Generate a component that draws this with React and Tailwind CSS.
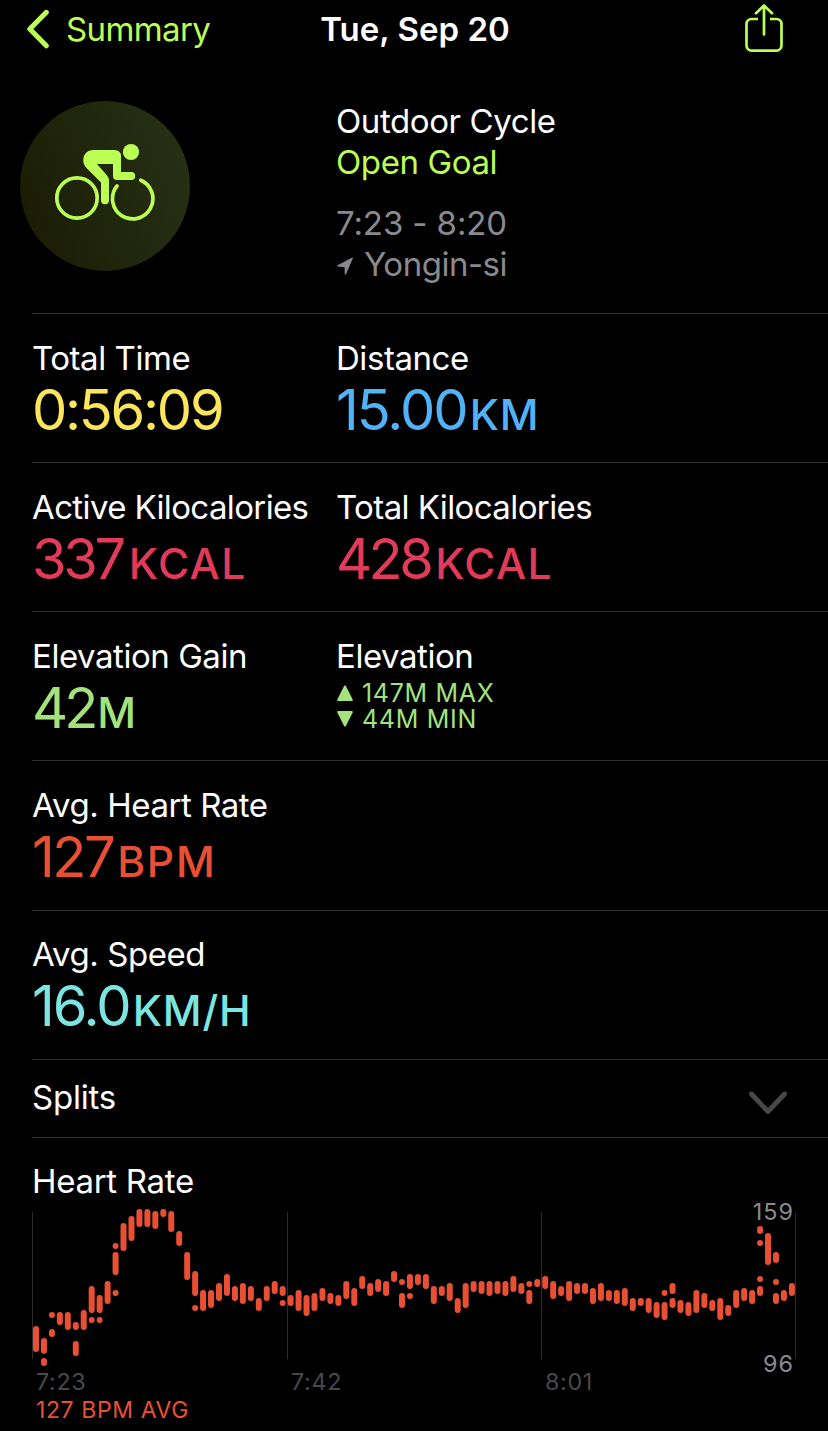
const METRIC_ROWS = [
  {
    height: 'h-[149px]',
    items: [
      { label: 'Total Time', value: '0:56:09', color: 'text-[#fbe65b]', tracking: 'tracking-[-2.3px]' },
      { label: 'Distance', value: '15.00', unit: 'KM', gap: 'ml-[3px] tracking-[0.9px]', color: 'text-[#52b2f7]', tracking: 'tracking-[-2px]' },
    ],
  },
  {
    height: 'h-[149px]',
    items: [
      { label: 'Active Kilocalories', labelTracking: 'tracking-[-0.63px]', value: '337', unit: 'KCAL', gap: 'ml-[6px] tracking-[1.5px]', color: 'text-[#e23a59]', tracking: 'tracking-[-3.4px]' },
      { label: 'Total Kilocalories', labelTracking: 'tracking-[-0.6px]', value: '428', unit: 'KCAL', gap: 'ml-[5px] tracking-[1.4px]', color: 'text-[#e23a59]', tracking: 'tracking-[-3.6px]' },
    ],
  },
  {
    height: 'h-[149px]',
    items: [
      { label: 'Elevation Gain', value: '42', unit: 'M', gap: 'ml-[3px]', color: 'text-[#a3e27d]', tracking: 'tracking-[-4px]' },
      { label: 'Elevation', range: { max: '147M MAX', min: '44M MIN' } },
    ],
  },
  {
    height: 'h-[150px]',
    items: [{ label: 'Avg. Heart Rate', value: '127', unit: 'BPM', gap: 'ml-[4px] tracking-[1.8px]', color: 'text-[#e95033]', tracking: 'tracking-[-2.5px]' }],
  },
  {
    height: 'h-[149px]',
    padding: 'pt-[23px]',
    items: [{ label: 'Avg. Speed', value: '16.0', unit: 'KM/H', gap: 'ml-[3px] tracking-[0.9px]', color: 'text-[#7ce5e1]', tracking: 'tracking-[-2px]' }],
  },
];

// One entry per time slot, each a list of [top, bottom] segments in chart units
const HEART_RATE = [
  [[408, 486]],
  [[444, 491], [504, 528]],
  [[366, 384], [417, 441]],
  [[366, 405]],
  [[366, 420]],
  [[396, 420], [453, 498]],
  [[360, 420]],
  [[288, 369], [381, 399]],
  [[315, 369], [381, 399]],
  [[273, 342]],
  [[159, 177], [186, 255], [300, 318]],
  [[99, 183]],
  [[78, 153]],
  [[57, 111]],
  [[57, 111]],
  [[63, 117]],
  [[57, 81]],
  [[63, 126]],
  [[123, 168]],
  [[186, 270]],
  [[243, 318], [345, 363]],
  [[300, 363]],
  [[300, 354]],
  [[279, 333]],
  [[252, 318]],
  [[288, 333]],
  [[279, 342]],
  [[288, 333]],
  [[324, 363]],
  [[288, 333]],
  [[273, 312]],
  [[288, 318], [330, 348]],
  [[315, 348]],
  [[300, 363]],
  [[315, 378]],
  [[309, 363]],
  [[294, 333]],
  [[309, 342]],
  [[315, 348]],
  [[273, 327]],
  [[294, 348]],
  [[258, 297]],
  [[279, 318]],
  [[267, 306]],
  [[273, 318]],
  [[243, 276]],
  [[267, 285], [309, 354]],
  [[252, 297], [309, 327]],
  [[252, 285]],
  [[252, 297]],
  [[288, 342]],
  [[288, 318]],
  [[279, 333]],
  [[324, 369]],
  [[279, 354]],
  [[273, 306]],
  [[273, 312]],
  [[273, 318]],
  [[273, 312]],
  [[273, 318]],
  [[258, 306]],
  [[279, 312]],
  [[273, 291], [300, 342]],
  [[267, 291]],
  [[258, 297]],
  [[273, 327]],
  [[288, 318]],
  [[273, 333]],
  [[279, 312]],
  [[279, 312]],
  [[294, 342]],
  [[279, 333]],
  [[300, 333]],
  [[300, 342]],
  [[294, 348]],
  [[324, 363]],
  [[324, 348]],
  [[324, 369]],
  [[336, 384]],
  [[300, 318], [336, 390]],
  [[279, 312], [324, 354]],
  [[330, 369]],
  [[336, 378]],
  [[300, 369]],
  [[309, 354]],
  [[330, 363]],
  [[324, 390]],
  [[345, 378]],
  [[300, 354]],
  [[294, 333]],
  [[300, 342]],
  [[108, 132], [150, 168], [258, 276], [288, 318]],
  [[129, 225]],
  [[186, 219], [267, 285], [309, 342]],
  [[300, 333]],
  [[279, 318]],
];

const SLOT_START = 108;
const SLOT_STEP = 23.87;
const GRID_LINES = [97.5, 862.5, 1624.5, 2386.5];

const BackIcon = () => (
  <svg className="w-6 h-10" viewBox="0 0 24 40" fill="none" stroke="currentColor" strokeWidth="5" strokeLinecap="round" strokeLinejoin="round">
    <path d="M21.3 3.3 4.8 20.1l16.5 16.7" />
  </svg>
);

const ShareIcon = () => (
  <svg className="w-10 h-[50px]" viewBox="0 0 40 50" fill="none" stroke="currentColor" strokeWidth="2.7" strokeLinecap="round" strokeLinejoin="round">
    <path strokeLinecap="butt" d="M14 16H7.5a5 5 0 0 0-5 5v21.6a5 5 0 0 0 5 5h25a5 5 0 0 0 5-5V21a5 5 0 0 0-5-5H26" />
    <path d="M20 31.5V2.6M12 10.2l8-7.8 8 7.8" />
  </svg>
);

const CyclistIcon = () => (
  <svg className="w-[102px] h-[78px]" viewBox="54 143 102 78">
    <g fill="none" stroke="currentColor" strokeWidth="3.7" strokeLinecap="round">
      <circle cx="77" cy="198" r="20.2" />
      <path d="M140.800 180.200A20.200 20.200 0 1 1 117 186" />
    </g>
    <g fill="currentColor">
      <circle cx="131" cy="152" r="8.1" />
      <path d="M93 150h21.5q6.5 0 6.5 6.5V172h10.200a4 4 0 0 1 0 8H117q-4 0-4-4v-12H97l10 11.500q2 2.300 2 5V200.200a4 4 0 0 1-8 0V182.500L86 167.500Q83 164 83.300 159.500 84 150.500 93 150z" />
    </g>
  </svg>
);

const LocationIcon = () => (
  <svg className="w-[17px] h-[18px] mt-0.5" viewBox="0 0 17 18" fill="currentColor" stroke="currentColor" strokeWidth="1.3" strokeLinejoin="round">
    <path d="M16.2 1.200 1.800 8.800l7.400.8.2 7.400z" />
  </svg>
);

const Metric = ({ item, padding = 'pt-6' }) => (
  <div className={padding}>
    <p className={`text-[33px] leading-10 whitespace-nowrap text-white ${item.labelTracking || 'tracking-[-0.45px]'}`}>{item.label}</p>
    {item.range ? (
      <div className="mt-1 text-[25px] leading-[26px] tracking-[0.7px] text-[#a3e27d]">
        <div className="flex items-center gap-2">
          <svg className="w-[18px] h-[18px]" viewBox="0 0 18 18" fill="currentColor" stroke="currentColor" strokeWidth="2" strokeLinejoin="round">
            <path d="M9 2.500 2.200 16h13.600z" />
          </svg>
          <span>{item.range.max}</span>
        </div>
        <div className="flex items-center gap-2">
          <svg className="w-[18px] h-[18px]" viewBox="0 0 18 18" fill="currentColor" stroke="currentColor" strokeWidth="2" strokeLinejoin="round">
            <path d="M9 15.500 2.200 2h13.600z" />
          </svg>
          <span>{item.range.min}</span>
        </div>
      </div>
    ) : (
      <p className={`mt-0.5 text-[56px] leading-[60px] whitespace-nowrap ${item.color} ${item.tracking}`}>
        {item.value}
        {item.unit && <span className={`text-[42.5px] leading-none font-medium ${item.gap}`}>{item.unit}</span>}
      </p>
    )}
  </div>
);

const HeartRateChart = () => (
  <svg className="block w-[828px] h-[195px] overflow-visible" viewBox="0 33 2484 585">
    {GRID_LINES.map((x) => (
      <line key={x} x1={x} x2={x} y1="66" y2="507" stroke="#2c2c2e" strokeWidth="3" />
    ))}
    <g stroke="#e95033" strokeWidth="18" strokeLinecap="round">
      {HEART_RATE.map((segments, i) =>
        segments.map(([top, bottom]) => (
          <line
            key={`${i}-${top}`}
            x1={SLOT_START + i * SLOT_STEP}
            x2={SLOT_START + i * SLOT_STEP}
            y1={top + 9}
            y2={bottom - 8.9}
          />
        ))
      )}
    </g>
    <g fontSize="70" fill="#8a8a8e" textAnchor="end" letterSpacing="3">
      <text x="2382" y="90">159</text>
      <text x="2382" y="546">96</text>
    </g>
    <g fontSize="70" fill="#48484a" letterSpacing="2">
      <text x="108" y="600">7:23</text>
      <text x="873" y="600">7:42</text>
      <text x="1635" y="600">8:01</text>
    </g>
  </svg>
);

export default function App() {
  return (
    <div className="w-[828px] h-[1431px] overflow-hidden bg-black text-white font-['Inter','Liberation_Sans',sans-serif]">
      <header className="grid grid-cols-[1fr_auto_1fr] items-start h-[101px] pl-[25px] pr-[23px] text-[33px] leading-10">
        <div className="flex items-center gap-[17px] pt-[9px] text-[#bcff54]">
          <BackIcon />
          <span className="tracking-[-0.6px]">Summary</span>
        </div>
        <h1 className="pt-[9px] text-center font-semibold whitespace-nowrap">Tue, Sep 20</h1>
        <div className="flex justify-end pt-[3px] pr-[21px] text-[#bcff54]">
          <ShareIcon />
        </div>
      </header>

      <section className="flex h-[212px]">
        <div className="w-[336px] pl-5">
          <div className="flex justify-center w-[170px] h-[170px] pt-[42px] rounded-full bg-linear-70 from-[#191b03] to-[#283217] text-[#bcff54]">
            <CyclistIcon />
          </div>
        </div>
        <div className="text-[33px] leading-[41px] tracking-[-0.4px]">
          <p>Outdoor Cycle</p>
          <p className="text-[#bcff54]">Open Goal</p>
          <div className="mt-5 text-[#8a8a8e]">
            <p className="tracking-[-0.1px]">7:23 - 8:20</p>
            <p className="flex items-center gap-[11px] tracking-[-0.5px]">
              <LocationIcon />
              Yongin-si
            </p>
          </div>
        </div>
      </section>

      <main className="ml-8 border-t border-[#303032]">
        {METRIC_ROWS.map((row) => (
          <section key={row.items[0].label} className={`grid grid-cols-[304px_1fr] border-b border-[#303032] ${row.height}`}>
            {row.items.map((item) => (
              <Metric key={item.label} item={item} padding={row.padding} />
            ))}
          </section>
        ))}
        <section className="flex items-center justify-between h-[78px] pr-[39px] pb-[3px] border-b border-[#303032]">
          <h2 className="text-[33px] leading-10 tracking-[-0.2px]">Splits</h2>
          <svg className="w-[42px] h-7 mt-3" viewBox="0 0 42 28" fill="none" stroke="#48484a" strokeWidth="4.8" strokeLinecap="round" strokeLinejoin="round">
            <path d="M4.5 5 21 22.5 37.5 5" />
          </svg>
        </section>
        <section className="pt-[23px]">
          <h2 className="text-[33px] leading-10 tracking-[-0.3px]">Heart Rate</h2>
          <div className="-ml-8">
            <HeartRateChart />
          </div>
          <p className="pl-1 text-[23px] leading-7 tracking-[0.6px] text-[#e95033]">127 BPM AVG</p>
        </section>
      </main>
    </div>
  );
}
